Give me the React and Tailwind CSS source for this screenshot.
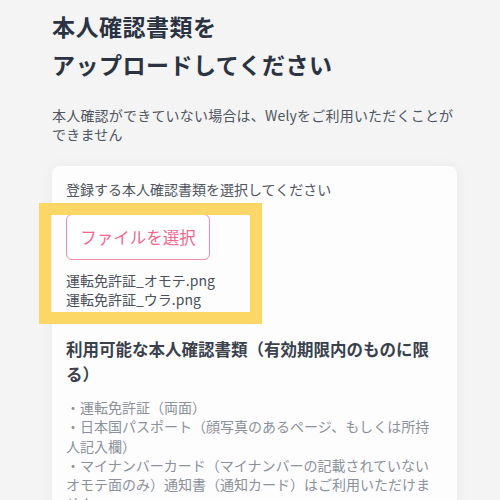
const DOCS = [
  '・運転免許証（両面）',
  '・日本国パスポート（顔写真のあるページ、もしくは所持人記入欄）',
  '・マイナンバーカード（マイナンバーの記載されていないオモテ面のみ）通知書（通知カード）はご利用いただけません',
];

const FILES = ['運転免許証_オモテ.png', '運転免許証_ウラ.png'];

export default function App() {
  return (
    <div className="min-h-[500px] bg-[#f4f4f4] font-['Noto_Sans_CJK_JP',sans-serif] pl-[52px] pt-[7px]">
      <div className="w-[405px]">
        <h1 className="text-[23px] leading-[38px] font-bold tracking-[0.5px] text-[#2b3343]">
          本人確認書類を<br />アップロードしてください
        </h1>
        <p className="mt-[23px] text-[14px] leading-[19px] tracking-[0.2px] text-[#4f5561]">
          本人確認ができていない場合は、Welyをご利用いただくことができません
        </p>

        {/* カード */}
        <div className="mt-[22px] bg-[#fdfdfd] rounded-[8px] shadow-[0_0_14px_rgba(0,0,0,0.05)] pl-[14px] pr-[15px] pt-[13px] pb-6">
          <p className="text-[14px] leading-[20px] text-[#4f5561]">登録する本人確認書類を選択してください</p>

          <div className="relative mt-[15px]">
            <div className="absolute left-[-27px] top-[-11px] w-[223px] h-[121px] border-[12px] border-[#fdd766] pointer-events-none" />
            <button className="h-[46px] w-[144px] rounded-[6px] border-[1.5px] border-[#f58ba6] bg-white text-[16.5px] text-[#f1678d]">
              ファイルを選択
            </button>
            <div className="mt-[11px] text-[14px] leading-[19px] text-[#4a505c]">
              {FILES.map(f => <p key={f}>{f}</p>)}
            </div>
          </div>

          <h2 className="mt-[28px] text-[16.5px] leading-[25px] font-bold text-[#3a404c]">
            利用可能な本人確認書類（有効期限内のものに限る）
          </h2>
          <ul className="mt-[11px] text-[14px] leading-[19.3px] text-[#8c919b]">
            {DOCS.map(d => <li key={d}>{d}</li>)}
          </ul>
        </div>
      </div>
    </div>
  );
}
